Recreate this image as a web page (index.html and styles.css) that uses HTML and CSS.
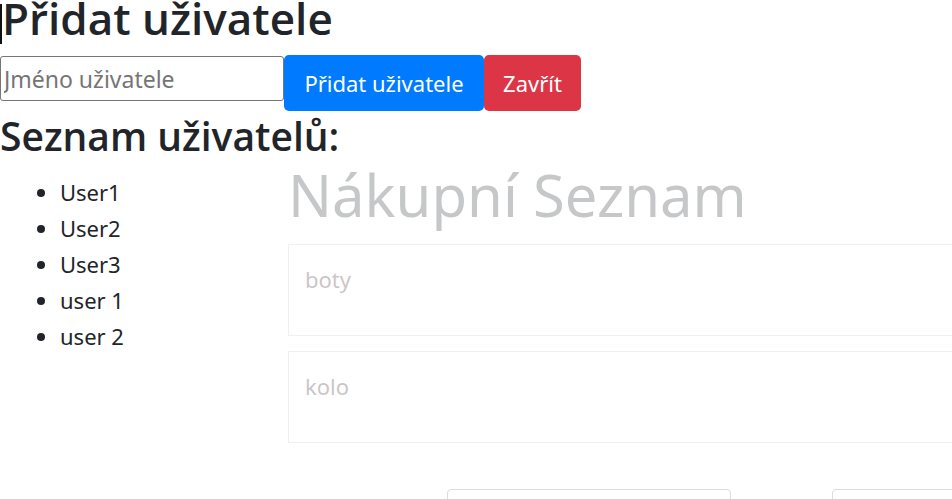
FILE: index.html
```html
<!DOCTYPE html>
<html lang="cs">
<head>
<meta charset="utf-8">
<title>Přidat uživatele</title>
<link rel="stylesheet" href="styles.css">
</head>
<body>
<div class="app-layer">
  <div class="app">
    <h1 class="app-title">Nákupní Seznam</h1>
    <div class="card"><p>boty</p></div>
    <div class="card"><p>kolo</p></div>
    <div class="form-row">
      <div class="field field-wide"></div>
      <div class="field field-small"></div>
    </div>
  </div>
</div>
<div class="modal">
  <h1 class="modal-title"><span class="caret"></span>Přidat uživatele</h1>
  <div class="add-row">
    <input class="name-input" type="text" placeholder="Jméno uživatele">
    <button class="btn btn-primary">Přidat uživatele</button>
    <button class="btn btn-danger">Zavřít</button>
  </div>
  <h2 class="list-title">Seznam uživatelů:</h2>
  <ul class="user-list">
    <li>User1</li>
    <li>User2</li>
    <li>User3</li>
    <li>user 1</li>
    <li>user 2</li>
  </ul>
</div>
</body>
</html>
```

FILE: styles.css
```css
html, body {
  margin: 0;
  padding: 0;
}
body {
  width: 952px;
  height: 499px;
  overflow: hidden;
  position: relative;
  background: #fff;
  color: #212529;
  font-family: "Noto Sans", "Open Sans", sans-serif;
}

/* faded application behind the modal */
.app-layer {
  position: absolute;
  inset: 0;
  opacity: 0.25;
  overflow: hidden;
}
.app {
  padding: 160px 0 0 288px;
  width: 720px;
}
.app-title {
  margin: 0 0 14px 0;
  font-size: 58px;
  font-weight: 400;
  line-height: 70px;
  color: #212529;
}
.card {
  box-sizing: border-box;
  height: 92px;
  border: 1px solid rgba(0, 0, 0, 0.22);
  padding: 20px 16px;
  margin-bottom: 15px;
}
.card p {
  margin: 0;
  font-size: 22px;
  line-height: 28px;
  font-weight: 400;
  color: #3d1525;
}
.form-row {
  display: flex;
  gap: 101px;
  padding: 31px 0 0 159px;
}
.field {
  flex-shrink: 0;
  height: 40px;
  border: 1px solid #767676;
  border-radius: 4px;
}
.field-wide { width: 282px; }
.field-small { width: 200px; }

/* modal content */
.modal {
  position: relative;
  z-index: 1;
}
.modal-title {
  margin: 0 0 19px 0;
  font-family: "Open Sans", "Noto Sans", sans-serif;
  font-size: 44px;
  font-weight: 600;
  line-height: 36px;
  white-space: nowrap;
}
.caret {
  display: inline-block;
  width: 2px;
  height: 40px;
  margin-bottom: -9px;
  background: #111;
}
.add-row {
  display: flex;
  align-items: flex-start;
}
.name-input {
  box-sizing: border-box;
  width: 284px;
  height: 45px;
  margin: 1px 0 0 0;
  border: 1px solid #767676;
  border-radius: 3px;
  padding: 0 3px;
  font-family: inherit;
  font-size: 23px;
  color: #212529;
  background: #fff;
}
.name-input::placeholder {
  color: #757575;
}
.btn {
  box-sizing: border-box;
  height: 56px;
  margin: 0;
  border: 0;
  border-radius: 5px;
  padding: 0;
  font-family: inherit;
  font-size: 22px;
  color: #fff;
}
.btn-primary {
  background: #007bff;
  width: 200px;
}
.btn-danger {
  background: #dc3545;
  width: 97px;
}
.list-title {
  margin: 5px 0 18px 0;
  font-family: "Open Sans", "Noto Sans", sans-serif;
  font-size: 39px;
  font-weight: 600;
  line-height: 40px;
}
.user-list {
  margin: 0;
  padding-left: 60px;
  font-size: 22px;
  line-height: 36px;
}
```
